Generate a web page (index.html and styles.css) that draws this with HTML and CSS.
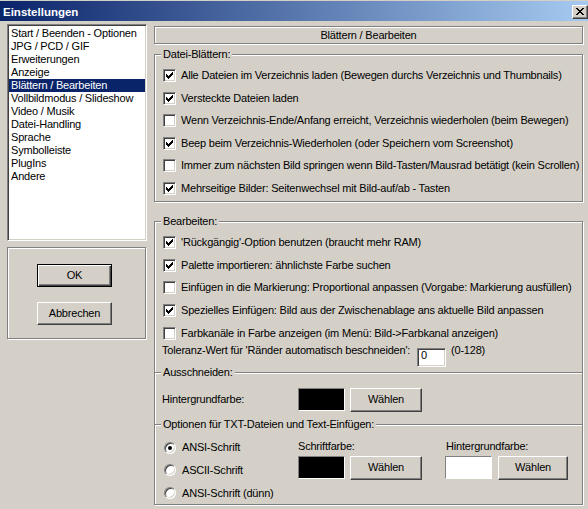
FILE: index.html
```html
<!DOCTYPE html>
<html>
<head>
<meta charset="utf-8">
<title>Einstellungen</title>
<link rel="stylesheet" href="styles.css">
</head>
<body>
<div class="titlebar">
  <span class="title">Einstellungen</span>
  <span class="close"><svg width="8" height="7" viewBox="0 0 8 7" shape-rendering="crispEdges"><path fill="#000" d="M0 0h2v1H0z M6 0h2v1H6z M1 1h2v1H1z M5 1h2v1H5z M2 2h4v1H2z M3 3h2v1H3z M2 4h4v1H2z M1 5h2v1H1z M5 5h2v1H5z M0 6h2v1H0z M6 6h2v1H6z"/></svg></span>
</div>
<div class="main">
  <div class="left">
    <ul class="list">
      <li>Start / Beenden - Optionen</li>
      <li>JPG / PCD / GIF</li>
      <li>Erweiterungen</li>
      <li>Anzeige</li>
      <li class="sel">Blättern / Bearbeiten</li>
      <li>Vollbildmodus / Slideshow</li>
      <li>Video / Musik</li>
      <li>Datei-Handling</li>
      <li>Sprache</li>
      <li>Symbolleiste</li>
      <li>PlugIns</li>
      <li>Andere</li>
    </ul>
    <div class="btnpanel">
      <div class="btn default">OK</div>
      <div class="btn">Abbrechen</div>
    </div>
  </div>
  <div class="right">
    <div class="header">Blättern / Bearbeiten</div>
    <fieldset class="group g1">
      <legend>Datei-Blättern:</legend>
      <div class="row r1"><span class="cb"><svg class="chk" width="7" height="7" viewBox="0 0 7 7" shape-rendering="crispEdges"><path d="M0 2h1v3H0z M1 3h1v3H1z M2 4h1v3H2z M3 3h1v3H3z M4 2h1v3H4z M5 1h1v3H5z M6 0h1v3H6z"/></svg></span><span>Alle Dateien im Verzeichnis laden (Bewegen durchs Verzeichnis und Thumbnails)</span></div>
      <div class="row r1"><span class="cb"><svg class="chk" width="7" height="7" viewBox="0 0 7 7" shape-rendering="crispEdges"><path d="M0 2h1v3H0z M1 3h1v3H1z M2 4h1v3H2z M3 3h1v3H3z M4 2h1v3H4z M5 1h1v3H5z M6 0h1v3H6z"/></svg></span><span>Versteckte Dateien laden</span></div>
      <div class="row r1"><span class="cb"></span><span>Wenn Verzeichnis-Ende/Anfang erreicht, Verzeichnis wiederholen (beim Bewegen)</span></div>
      <div class="row r1"><span class="cb"><svg class="chk" width="7" height="7" viewBox="0 0 7 7" shape-rendering="crispEdges"><path d="M0 2h1v3H0z M1 3h1v3H1z M2 4h1v3H2z M3 3h1v3H3z M4 2h1v3H4z M5 1h1v3H5z M6 0h1v3H6z"/></svg></span><span>Beep beim Verzeichnis-Wiederholen (oder Speichern vom Screenshot)</span></div>
      <div class="row r1"><span class="cb"></span><span>Immer zum nächsten Bild springen wenn Bild-Tasten/Mausrad betätigt (kein Scrollen)</span></div>
      <div class="row r1"><span class="cb"><svg class="chk" width="7" height="7" viewBox="0 0 7 7" shape-rendering="crispEdges"><path d="M0 2h1v3H0z M1 3h1v3H1z M2 4h1v3H2z M3 3h1v3H3z M4 2h1v3H4z M5 1h1v3H5z M6 0h1v3H6z"/></svg></span><span>Mehrseitige Bilder: Seitenwechsel mit Bild-auf/ab - Tasten</span></div>
    </fieldset>
    <fieldset class="group g2">
      <legend>Bearbeiten:</legend>
      <div class="row r2"><span class="cb"><svg class="chk" width="7" height="7" viewBox="0 0 7 7" shape-rendering="crispEdges"><path d="M0 2h1v3H0z M1 3h1v3H1z M2 4h1v3H2z M3 3h1v3H3z M4 2h1v3H4z M5 1h1v3H5z M6 0h1v3H6z"/></svg></span><span>'Rückgängig'-Option benutzen (braucht mehr RAM)</span></div>
      <div class="row r2"><span class="cb"><svg class="chk" width="7" height="7" viewBox="0 0 7 7" shape-rendering="crispEdges"><path d="M0 2h1v3H0z M1 3h1v3H1z M2 4h1v3H2z M3 3h1v3H3z M4 2h1v3H4z M5 1h1v3H5z M6 0h1v3H6z"/></svg></span><span>Palette importieren: ähnlichste Farbe suchen</span></div>
      <div class="row r2"><span class="cb"></span><span>Einfügen in die Markierung: Proportional anpassen (Vorgabe: Markierung ausfüllen)</span></div>
      <div class="row r2"><span class="cb"><svg class="chk" width="7" height="7" viewBox="0 0 7 7" shape-rendering="crispEdges"><path d="M0 2h1v3H0z M1 3h1v3H1z M2 4h1v3H2z M3 3h1v3H3z M4 2h1v3H4z M5 1h1v3H5z M6 0h1v3H6z"/></svg></span><span>Spezielles Einfügen: Bild aus der Zwischenablage ans aktuelle Bild anpassen</span></div>
      <div class="row r2"><span class="cb"></span><span>Farbkanäle in Farbe anzeigen (im Menü: Bild-&gt;Farbkanal anzeigen)</span></div>
      <div class="tol">
        <span class="tol-label">Toleranz-Wert für 'Ränder automatisch beschneiden':</span>
        <span class="edit">0</span>
        <span class="tol-range">(0-128)</span>
      </div>
      <fieldset class="sub s1">
        <legend>Ausschneiden:</legend>
        <div class="colorrow">
          <span class="clabel">Hintergrundfarbe:</span>
          <span class="swatch black"></span>
          <span class="btn choose">Wählen</span>
        </div>
      </fieldset>
      <fieldset class="sub s2">
        <legend>Optionen für TXT-Dateien und Text-Einfügen:</legend>
        <div class="opts">
          <div class="radios">
            <div class="rrow"><span class="radio on"></span><span>ANSI-Schrift</span></div>
            <div class="rrow"><span class="radio"></span><span>ASCII-Schrift</span></div>
            <div class="rrow"><span class="radio"></span><span>ANSI-Schrift (dünn)</span></div>
          </div>
          <div class="ccol c2">
            <div class="ctitle">Schriftfarbe:</div>
            <div class="cline"><span class="swatch black"></span><span class="btn choose">Wählen</span></div>
          </div>
          <div class="ccol c3">
            <div class="ctitle">Hintergrundfarbe:</div>
            <div class="cline"><span class="swatch white"></span><span class="btn choose narrow">Wählen</span></div>
          </div>
        </div>
      </fieldset>
    </fieldset>
  </div>
</div>
</body>
</html>
```

FILE: styles.css
```css
* { box-sizing: border-box; }
html, body { margin: 0; padding: 0; }
body {
  width: 588px;
  height: 509px;
  overflow: hidden;
  background: #D4D0C8;
  font-family: "Liberation Sans", Arial, sans-serif;
  font-size: 11px;
  line-height: 13px;
  letter-spacing: -0.2px;
  color: #000;
}

/* title bar */
.titlebar {
  margin-top: 1px;
  height: 20px;
  background: linear-gradient(to right, #0A246A, #A6CAF0);
  display: flex;
  align-items: flex-start;
  justify-content: space-between;
}
.title {
  color: #fff;
  font-weight: bold;
  font-size: 11.5px;
  line-height: 13px;
  letter-spacing: 0;
  margin: 5px 0 0 3px;
}
.close {
  width: 16px;
  height: 14px;
  margin-top: 4px;
  background: #D4D0C8;
  border: 1px solid;
  border-color: #fff #404040 #404040 #fff;
  box-shadow: inset -1px -1px #808080;
  display: flex;
  align-items: flex-start;
  padding: 2px 0 0 3px;
}
.close svg { display: block; }

/* layout */
.main {
  display: flex;
  align-items: flex-start;
  padding-left: 7px;
  gap: 7px;
}
.left { width: 140px; margin-top: 3px; }
.right { width: 429px; margin-top: 5px; }

/* listbox */
.list {
  list-style: none;
  margin: 0;
  height: 217px;
  padding: 2px 1px 0 1px;
  background: #fff;
  border: 1px solid;
  border-color: #808080 #fff #fff #808080;
  box-shadow: inset 1px 1px #404040, inset -1px -1px #D4D0C8;
}
.list li {
  height: 13px;
  padding-left: 2px;
  white-space: nowrap;
}
.list li.sel { background: #0A246A; color: #fff; }

/* etched panels */
.btnpanel {
  margin-top: 6px;
  width: 139px;
  height: 92px;
  border: 1px solid #808080;
  box-shadow: inset 1px 1px #fff, 1px 1px #fff;
  display: flex;
  flex-direction: column;
  gap: 15px;
  padding: 16px 0 0 29px;
}

/* buttons */
.btn {
  display: flex;
  align-items: center;
  justify-content: center;
  background: #D4D0C8;
  border: 1px solid;
  border-color: #fff #404040 #404040 #fff;
  box-shadow: inset -1px -1px #808080;
  white-space: nowrap;
}
.btnpanel .btn { width: 75px; height: 23px; padding-bottom: 1px; }
.btn.default {
  border: 1px solid #000;
  box-shadow: inset 1px 1px #fff, inset -1px -1px #404040, inset -2px -2px #808080;
}

.header {
  height: 18px;
  border: 1px solid #808080;
  box-shadow: inset 1px 1px #fff, 1px 1px #fff;
  text-align: center;
  line-height: 16px;
}

/* group boxes */
.group {
  margin: 0;
  min-width: 0;
  padding: 0 0 0 7px;
  border: 1px solid #808080;
  box-shadow: inset 1px 1px #fff, 1px 1px #fff;
}
.group > legend, .sub > legend {
  padding: 0 2px 0 2px;
  margin-left: -1px;
  line-height: 13px;
  background: #D4D0C8;
  white-space: nowrap;
}
.g1 { margin-top: 4px; padding-top: 3.6px; padding-bottom: 1.7px; }
.g2 { margin-top: 13px; padding-top: 3.1px; padding-bottom: 0; }

.row {
  display: flex;
  align-items: center;
  white-space: nowrap;
}
.r1 { height: 22.45px; }
.r2 { height: 22.75px; }

.cb {
  flex: none;
  width: 13px;
  height: 13px;
  margin: 0 5px 0 1px;
  background: #fff;
  border: 1px solid;
  border-color: #808080 #fff #fff #808080;
  box-shadow: inset 1px 1px #404040, inset -1px -1px #D4D0C8;
  padding: 2px 0 0 2px;
}
.chk { display: block; fill: #000; }

/* tolerance row */
.tol {
  display: flex;
  align-items: flex-start;
  height: 22px;
  white-space: nowrap;
}
.tol-label { width: 255px; margin-top: -1px; }
.edit {
  width: 29px;
  height: 19px;
  margin-top: 3px;
  background: #fff;
  border: 1px solid;
  border-color: #808080 #fff #fff #808080;
  box-shadow: inset 1px 1px #404040, inset -1px -1px #D4D0C8;
  padding: 2px 0 0 3px;
  line-height: 9px;
}
.tol-range { margin: -1px 0 0 5px; }

/* sub sections */
.sub {
  margin: 0 0 0 -7px;
  min-width: 0;
  padding: 0 0 0 7px;
  border: none;
  border-top: 1px solid #808080;
  box-shadow: inset 0 1px #fff;
}
.s1 { margin-top: -1px; padding-top: 9.15px; }
.s2 { margin-top: 6px; padding-top: 5.3px; }

.colorrow {
  display: flex;
  align-items: center;
  height: 24px;
  white-space: nowrap;
}
.clabel { width: 136px; }

.swatch {
  flex: none;
  width: 47px;
  height: 23px;
  border: 1px solid;
  border-color: #808080 #fff #fff #808080;
}
.swatch.black { background: #000; }
.swatch.white { background: #fff; }
.choose { width: 72px; height: 24px; margin-left: 5px; }
.choose.narrow { width: 70px; margin-left: 6px; }

.opts { display: flex; align-items: flex-start; white-space: nowrap; }
.radios { width: 136px; }
.rrow { display: flex; align-items: center; height: 22.75px; }
.radio {
  flex: none;
  position: relative;
  width: 12px;
  height: 12px;
  margin: 0 6px 0 2px;
  border-radius: 50%;
  background: #fff;
  border: 1px solid;
  border-color: #808080 #fff #fff #808080;
  box-shadow: inset 1px 1px #404040, inset -1px -1px #D4D0C8;
}
.radio.on::after {
  content: "";
  position: absolute;
  left: 3px;
  top: 3px;
  width: 4px;
  height: 4px;
  border-radius: 50%;
  background: #000;
}
.ccol { display: flex; flex-direction: column; align-items: flex-start; }
.c2 { width: 147px; }
.ctitle { margin-top: 4px; }
.c3 .ctitle { margin-left: 1px; }
.cline { display: flex; align-items: flex-start; margin-top: 2.7px; }
```
